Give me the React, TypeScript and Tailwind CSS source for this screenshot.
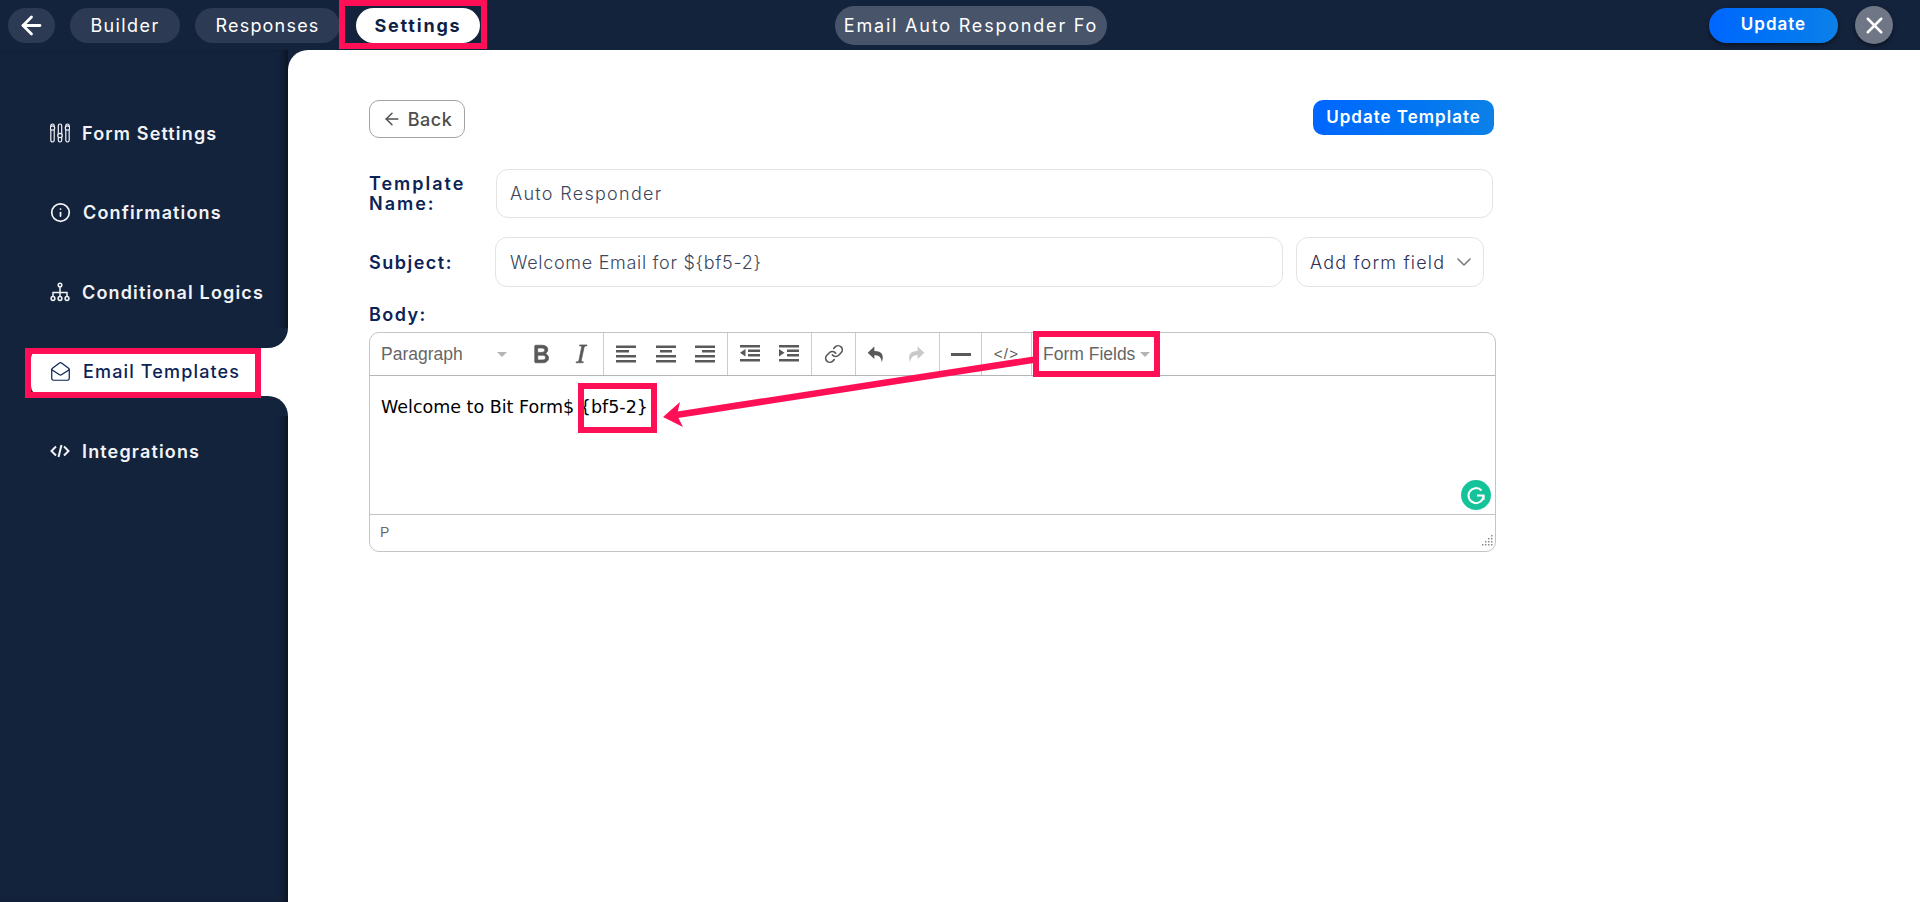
import React from "react";
import { ArrowLeft, X, Info, MailOpen, Link, ChevronDown } from "lucide-react";

const mont = "font-['Inter','Open_Sans',sans-serif]";

const NavIconSliders = () => (
  <svg width="20" height="20" viewBox="0 0 20 20" fill="none" stroke="currentColor" strokeWidth="1.2">
    <rect x="0.8" y="1" width="3.400" height="18" rx="1.700" />
    <rect x="8.300" y="1" width="3.400" height="18" rx="1.700" />
    <rect x="15.800" y="1" width="3.400" height="18" rx="1.700" />
    <circle cx="2.500" cy="5" r="2.200" fill="#14233c" />
    <circle cx="10" cy="12.500" r="2.200" fill="#14233c" />
    <circle cx="17.500" cy="5" r="2.200" fill="#14233c" />
  </svg>
);

const NavIconTree = () => (
  <svg width="20" height="20" viewBox="0 0 20 20" fill="none" stroke="currentColor" strokeWidth="1.5">
    <circle cx="10" cy="3" r="1.800" />
    <path d="M10 5v9M3 14v-3.500h14V14" />
    <circle cx="3" cy="16.500" r="1.900" />
    <circle cx="10" cy="16.500" r="1.900" />
    <circle cx="17" cy="16.500" r="1.900" />
  </svg>
);

const NavIconCode = () => (
  <svg width="20" height="20" viewBox="0 0 20 20" fill="none" stroke="currentColor" strokeWidth="2">
    <path d="M6 5.500 1.500 10 6 14.500M14 5.500l4.500 4.500-4.500 4.500M11.500 4 8.500 16" />
  </svg>
);

const Bars = ({ rows }: { rows: string[] }) => (
  <svg width="20" height="20" viewBox="0 0 20 20" fill="#595959">
    {rows.map((r, i) => (
      <path key={i} d={r} />
    ))}
  </svg>
);

const alignLeft = ["M0 1.500h20v2.500H0z", "M0 6h13v2.500H0z", "M0 11h20v2.500H0z", "M0 16h20v2.500H0z"];
const alignCenter = ["M0 1.500h20v2.500H0z", "M4 6h12v2.500H4z", "M0 11h20v2.500H0z", "M0 16h20v2.500H0z"];
const alignRight = ["M0 1.500h20v2.500H0z", "M7 6h13v2.500H7z", "M0 11h20v2.500H0z", "M0 16h20v2.500H0z"];
const outdent = ["M0 1h20v2.500H0z", "M8 5.500h12v2.500H8z", "M8 10h12v2.500H8z", "M0 15h20v2.500H0z", "M5.500 5v7.500L0 8.800z"];
const indent = ["M0 1h20v2.500H0z", "M8 5.500h12v2.500H8z", "M8 10h12v2.500H8z", "M0 15h20v2.500H0z", "M0 5v7.500l5.500-3.700z"];

const ToolBtn = ({ children }: { children: React.ReactNode }) => (
  <div className="w-10 h-full flex items-center justify-center">{children}</div>
);

const Corner = ({ pos }: { pos: "top" | "bottom" }) => (
  <div className={`absolute right-0 w-5 h-5 bg-white ${pos === "top" ? "-top-5" : "-bottom-5"}`}>
    <div className={`w-5 h-5 bg-[#14233c] ${pos === "top" ? "rounded-br-[20px]" : "rounded-tr-[20px]"}`} />
  </div>
);

const NavItem = ({ icon, label, active }: { icon: React.ReactNode; label: string; active?: boolean }) => (
  <div
    className={
      active
        ? "relative flex items-center gap-[12px] h-[48px] ml-[31px] pl-[19px] bg-white rounded-l-[10px] text-[#0c2356] font-medium"
        : "relative flex items-center gap-[12px] h-[48px] pl-[50px] text-[#f1f3f6] font-semibold"
    }
  >
    {active && <Corner pos="top" />}
    {icon}
    <span className="text-[18px] tracking-[1.15px]">{label}</span>
    {active && <Corner pos="bottom" />}
  </div>
);

export default function App() {
  return (
    <div className={`${mont} relative w-full h-[902px] overflow-hidden bg-[#14233c]`}>
      <header className="h-[50px] flex items-center relative">
        <div className="flex items-center pl-2">
          <button className="w-[47px] h-[35px] rounded-full bg-[#2c3a53] flex items-center justify-center text-white">
            <ArrowLeft size={29} strokeWidth={2.3} />
          </button>
          <button className="ml-[15px] w-[110px] h-[35px] rounded-full bg-[#2c3a53] text-white text-[18px] tracking-[1.400px]">Builder</button>
          <button className="ml-[15px] w-[145px] h-[35px] rounded-full bg-[#2c3a53] text-white text-[18px] tracking-[1.200px]">Responses</button>
          <button className="ml-[16px] w-[124px] h-[35px] rounded-full bg-white text-[#0f1f45] text-[18px] font-bold tracking-[1.800px]">Settings</button>
        </div>
        <div className="ml-[355px] w-[272px] h-[39px] rounded-full bg-[#47546a] text-white text-[18px] tracking-[1.800px] flex items-center justify-center whitespace-nowrap overflow-hidden">
          Email Auto Responder Fo
        </div>
        <button className="ml-[602px] w-[129px] h-[35px] rounded-full bg-gradient-to-r from-[#0066ff] to-[#0d80e8] text-white text-[17px] font-semibold tracking-[1px] shadow-[0_2px_4px_rgba(0,0,0,.5)]">
          Update
        </button>
        <button className="ml-[17px] w-[38px] h-[38px] rounded-full bg-[#6f7787] text-white flex items-center justify-center shadow-[0_2px_4px_rgba(0,0,0,.5)]">
          <X size={27} strokeWidth={2.2} />
        </button>
      </header>

      <div className="flex h-[852px]">
        <aside className="w-[288px] shrink-0 bg-[#14233c] pt-[59px] shadow-[inset_-7px_0_7px_-3px_rgba(0,0,0,.45)] flex flex-col gap-[31.500px]">
          <NavItem icon={<NavIconSliders />} label="Form Settings" />
          <NavItem icon={<Info size={21} strokeWidth={2} />} label="Confirmations" />
          <NavItem icon={<NavIconTree />} label="Conditional Logics" />
          <NavItem active icon={<MailOpen size={21} strokeWidth={1.4} />} label="Email Templates" />
          <NavItem icon={<NavIconCode />} label="Integrations" />
        </aside>

        <main className="flex-1 bg-white rounded-tl-[20px] pl-[81px] pt-[50px]">
          <div className="w-[1127px]">
            <div className="flex justify-between items-start pr-[2px]">
              <button className="w-[96px] h-[38px] rounded-[10px] border border-[#a3a3a3] text-[#4d4d4d] text-[18px] font-medium tracking-[0.5px] flex items-center justify-center gap-[6px]">
                <ArrowLeft size={20} strokeWidth={1.7} />
                Back
              </button>
              <button className="w-[181px] h-[35px] pt-[1px] rounded-[10px] bg-gradient-to-r from-[#0066ff] to-[#0d80e8] text-white text-[17px] font-semibold tracking-[1px]">
                Update Template
              </button>
            </div>

            <div className="flex items-center mt-[31px]">
              <div className="w-[127px] text-[18px] leading-[20px] font-semibold tracking-[2px] text-[#0c2356]">
                Template
                <br />
                Name:
              </div>
              <div className="w-[997px] h-[49px] rounded-[12px] border border-[#e3e3e3] pl-[13px] flex items-center text-[18px] font-light tracking-[1.300px] text-[#3c465c]">
                Auto Responder
              </div>
            </div>

            <div className="flex items-center mt-[19px]">
              <div className="w-[126px] text-[18px] font-semibold tracking-[1.500px] text-[#0c2356]">Subject:</div>
              <div className="w-[788px] h-[50px] rounded-[12px] border border-[#e3e3e3] pl-[14px] flex items-center text-[18px] font-light tracking-[0.7px] text-[#3c465c]">
                Welcome Email for {"${bf5-2}"}
              </div>
              <div className="ml-[13px] w-[188px] h-[50px] rounded-[12px] border border-[#e3e3e3] pl-[13px] pr-[7px] flex items-center justify-between text-[18px] font-light tracking-[1.200px] text-[#2f2f55]">
                Add form field
                <ChevronDown size={24} strokeWidth={1.5} className="text-[#777]" />
              </div>
            </div>

            <div className="mt-[17px] text-[18px] leading-[22px] font-semibold tracking-[1.400px] text-[#0c2356]">Body:</div>

            <div className="mt-[6px] h-[220px] rounded-[10px] border border-[#c4c4c4] flex flex-col font-['Liberation_Sans',sans-serif]">
              <div className="h-[43px] shrink-0 border-b border-[#b5b5b5] flex text-[#595959]">
                <div className="w-[234px] border-r border-[#ccc] flex items-center">
                  <div className="w-[151px] pl-[11px] pr-[14px] flex items-center justify-between text-[17.500px] text-[#666]">
                    Paragraph
                    <span className="w-0 h-0 border-x-[5px] border-x-transparent border-t-[5px] border-t-[#b5b5b5]" />
                  </div>
                  <ToolBtn>
                    <svg width="30" height="30" viewBox="0 0 24 24" fill="#595959">
                      <path d="M7.800 19c-.3 0-.5 0-.6-.2l-.2-.5V5.700c0-.2 0-.4.2-.5l.6-.2h5c1.500 0 2.700.3 3.500 1 .7.600 1.100 1.400 1.100 2.500a3 3 0 0 1-.6 1.900c-.4.600-1 1-1.600 1.200.4.100.9.300 1.300.6s.8.700 1 1.200c.4.400.5 1 .5 1.600 0 1.300-.4 2.300-1.300 3-.8.700-2.100 1-3.800 1H7.800zm5-8.300c.6 0 1.200-.1 1.600-.5.400-.3.600-.7.600-1.300 0-1.100-.8-1.700-2.400-1.700H9.300v3.500h3.500zm.5 6c.7 0 1.300-.1 1.700-.4.400-.4.600-.9.600-1.500s-.2-1-.7-1.400c-.4-.3-1-.4-2-.4H9.400v3.800h4z" stroke="#595959" strokeWidth="0.6" />
                    </svg>
                  </ToolBtn>
                  <ToolBtn>
                    <svg width="30" height="30" viewBox="0 0 24 24" fill="#595959">
                      <path d="M16.700 4.700l-.1.900h-.3c-.6 0-1 0-1.400.3-.3.300-.4.600-.5 1.100l-2.100 9.800v.6c0 .5.400.8 1.400.8h.2l-.2.800H8l.2-.8h.2c1.100 0 1.800-.5 2-1.500l2-9.800.1-.5c0-.6-.4-.8-1.400-.8h-.3l.2-.9h5.800z" stroke="#595959" strokeWidth="0.5" />
                    </svg>
                  </ToolBtn>
                </div>
                <div className="w-[124px] border-r border-[#ccc] flex px-[2px]">
                  <ToolBtn><Bars rows={alignLeft} /></ToolBtn>
                  <ToolBtn><Bars rows={alignCenter} /></ToolBtn>
                  <ToolBtn><Bars rows={alignRight} /></ToolBtn>
                </div>
                <div className="w-[84px] border-r border-[#ccc] flex px-[2px]">
                  <ToolBtn><Bars rows={outdent} /></ToolBtn>
                  <ToolBtn><Bars rows={indent} /></ToolBtn>
                </div>
                <div className="w-[44px] border-r border-[#ccc] flex items-center justify-center">
                  <Link size={20} strokeWidth={2} className="text-[#595959]" />
                </div>
                <div className="w-[84px] border-r border-[#ccc] flex">
                  <ToolBtn>
                    <svg width="20" height="20" viewBox="0 0 24 24" fill="#595959">
                      <path d="M10 3 2 10.500 10 18v-4.500c5 0 8 1.500 9 8.500 3-8 .5-13.500-9-13.500z" />
                    </svg>
                  </ToolBtn>
                  <ToolBtn>
                    <svg width="20" height="20" viewBox="0 0 24 24" fill="#c9c9c9">
                      <path d="M14 3l8 7.500-8 7.500v-4.500c-5 0-8 1.500-9 8.500-3-8-.5-13.500 9-13.500z" />
                    </svg>
                  </ToolBtn>
                </div>
                <div className="w-[42px] border-r border-[#ccc] flex items-center justify-center">
                  <span className="block w-5 h-[3px] bg-[#595959]" />
                </div>
                <div className="w-[50px] border-r border-[#ccc] flex items-center justify-center text-[15px] tracking-[1.200px]">
                  &lt;/&gt;
                </div>
                <div className="pl-[11px] flex items-center gap-[5px] text-[17.500px] text-[#666]">
                  Form Fields
                  <span className="w-0 h-0 border-x-[5px] border-x-transparent border-t-[5px] border-t-[#b5b5b5]" />
                </div>
              </div>

              <div className="relative flex-1 border-b border-[#c4c4c4] px-[11px] pt-[19px] font-['DejaVu_Sans',sans-serif] text-[17.500px] leading-[24px] text-black">
                Welcome to Bit Form$ {"{bf5-2}"}
                <div className="absolute right-[4px] bottom-[4px] w-[30px] h-[30px] rounded-full bg-[#15c39a] flex items-center justify-center">
                  <svg width="20" height="20" viewBox="0 0 20 20" fill="none" stroke="#fff" strokeWidth="2">
                    <path d="M15.500 5.500A7.500 7.500 0 1 0 17.500 10.500H11" />
                    <path d="M17.500 10.500v4.500" />
                  </svg>
                </div>
              </div>

              <div className="relative h-[36px] shrink-0 pl-[10px] pt-[10px] text-[14px] leading-[15px] text-[#6b6b6b]">
                P
                <svg className="absolute right-[2px] bottom-[5px]" width="12" height="12" viewBox="0 0 12 12" fill="#8a8a8a">
                  <path d="M10 1h1.500v1.500H10zM10 4h1.500v1.500H10zM7 4h1.500v1.500H7zM10 7h1.500v1.500H10zM7 7h1.500v1.500H7zM4 7h1.500v1.500H4zM10 10h1.500v1.500H10zM7 10h1.500v1.500H7zM4 10h1.500v1.500H4zM1 10h1.500v1.500H1z" />
                </svg>
              </div>
            </div>
          </div>
        </main>
      </div>

      {/* annotation boxes and arrow drawn on top of the screenshot */}
      <div className="absolute left-[339px] top-0 w-[148px] h-[49px] border-[6px] border-[#ff0f55]" />
      <div className="absolute left-[25px] top-[348px] w-[236px] h-[50px] border-[6px] border-[#ff0f55]" />
      <div className="absolute left-[1033px] top-[331px] w-[127px] h-[46px] border-[6px] border-[#ff0f55]" />
      <div className="absolute left-[578px] top-[383px] w-[79px] h-[50px] border-[6px] border-[#ff0f55]" />
      <svg className="absolute left-0 top-0 pointer-events-none" width="1920" height="902">
        <path d="M1032 360 676 415" stroke="#ff0f55" strokeWidth="6.500" strokeLinecap="round" />
        <path d="M663 417 680 402 677 415 683 427z" fill="#ff0f55" />
      </svg>
    </div>
  );
}
